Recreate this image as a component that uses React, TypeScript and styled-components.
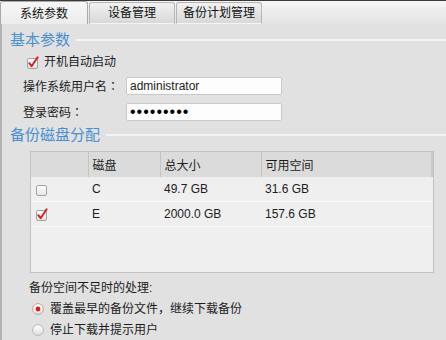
import React from 'react'
import styled, {createGlobalStyle} from 'styled-components'

const GlobalStyle = createGlobalStyle`
  html, body {
    margin: 0;
    padding: 0;
    background: #e1e1e1;
  }
  body {
    font-family: 'Liberation Sans', 'Noto Sans CJK SC', sans-serif;
    font-size: 12px;
    color: #1c1c1c;
  }
`

const Window = styled.div`
  width: 446px;
  height: 340px;
  box-sizing: border-box;
  overflow: hidden;
  border-top: 1px solid #3a3a3a;
  display: flex;
  flex-direction: column;
  background: #e1e1e1;
`

const TabStrip = styled.div`
  display: flex;
  align-items: flex-end;
  gap: 1px;
  height: 23px;
  flex-shrink: 0;
  background: linear-gradient(#f7f5f5, #e3e3e3);
`

const Tab = styled.div<{$active?: boolean; $width: number}>`
  width: ${p => p.$width}px;
  height: ${p => (p.$active ? 23 : 22)}px;
  box-sizing: border-box;
  display: flex;
  align-items: center;
  justify-content: center;
  border: 1px solid ${p => (p.$active ? '#a9a9a9' : '#b6b6b6')};
  border-bottom: ${p => (p.$active ? 'none' : '1px solid #f4f4f4')};
  border-radius: 3px 3px 0 0;
  background: ${p =>
    p.$active
      ? 'linear-gradient(#f6f6f6, #ececec)'
      : 'linear-gradient(#f1f1f1, #d8d8d8)'};
  color: #111;
  font-size: 12px;
  line-height: 14px;
  padding-top: ${p => (p.$active ? 1 : 0)}px;
`

const Panel = styled.div`
  flex: 1;
  display: flex;
  flex-direction: column;
  border-left: 2px solid #b3b3b3;
  padding-left: 8px;
`

const SectionTitle = styled.div<{$top: number}>`
  display: flex;
  align-items: center;
  gap: 6px;
  height: 20px;
  margin-top: ${p => p.$top}px;
  color: #4a8fd2;
  font-size: 15px;
  line-height: 20px;
  &::after {
    content: '';
    flex: 1;
    height: 2px;
    background: #f4f4f4;
  }
`

const CheckRow = styled.label`
  display: flex;
  align-items: center;
  gap: 4px;
  height: 20px;
  margin-top: 2px;
  padding-left: 17px;
  line-height: 14px;
`

const FormRow = styled.div<{$top: number}>`
  display: flex;
  align-items: center;
  height: 20px;
  margin-top: ${p => p.$top}px;
  padding-left: 13px;
`

const FieldLabel = styled.span`
  width: 103px;
  line-height: 14px;
`

// full-width colon drawn centred in its cell, as in the original dialog
const Colon = styled.span`
  font-family: 'Noto Sans CJK TC', sans-serif;
`

const Field = styled.input`
  width: 156px;
  height: 18px;
  box-sizing: border-box;
  margin: 0;
  padding: 0 3px;
  border: 1px solid #c9c9c9;
  border-radius: 2px;
  background: #fdfdfd;
  font-family: 'Liberation Sans', sans-serif;
  font-size: 12px;
  color: #1c1c1c;
  outline: none;
  &[type='password'] {
    letter-spacing: 1px;
    font-size: 16px;
    color: #000;
  }
`

const TableBox = styled.div`
  width: 404px;
  height: 122px;
  box-sizing: border-box;
  margin: 6px 0 0 20px;
  border: 1px solid #c2c2c2;
  background: #efefef;
`

const DiskTable = styled.table`
  width: 100%;
  border-collapse: collapse;
  table-layout: fixed;
`

const HeadCell = styled.th<{$divider?: boolean; $last?: boolean}>`
  height: 25px;
  padding: 0 0 0 4px;
  background: #dbdbdb;
  text-align: left;
  font-weight: normal;
  color: #1c1c1c;
  border-left: ${p => (p.$divider ? '1px solid #c4c4c4' : 'none')};
  border-right: ${p => (p.$last ? '2px solid #c8c8c8' : 'none')};
`

const Cell = styled.td<{$check?: boolean}>`
  height: 24px;
  padding: 0 0 0 ${p => (p.$check ? 5 : 4)}px;
  border-bottom: 1px solid #fbfbfb;
  vertical-align: middle;
  color: #1c1c1c;
  svg {
    display: block;
  }
`

const Note = styled.div`
  margin-top: 7px;
  padding-left: 19px;
  height: 16px;
  line-height: 16px;
`

const RadioRow = styled.label`
  display: flex;
  align-items: center;
  gap: 6px;
  height: 17px;
  margin-top: 4px;
  padding-left: 22px;
  line-height: 14px;
`

const CheckBox = ({checked}: {checked: boolean}) => (
  <svg width="13" height="13" viewBox="0 0 13 13">
    <defs>
      <linearGradient id="cbfill" x1="0" y1="0" x2="0" y2="1">
        <stop offset="0" stopColor="#ffffff" />
        <stop offset="1" stopColor="#e4e4e4" />
      </linearGradient>
    </defs>
    <rect x="0.5" y="2.5" width="10" height="10" rx="1.5" fill="url(#cbfill)" stroke="#a3a3a3" />
    {checked && (
      <path d="M2.3 7.2 L4.6 10.2 L10.6 1.2" fill="none" stroke="#d3201f" strokeWidth="1.9" strokeLinecap="round" strokeLinejoin="round" />
    )}
  </svg>
)

const Radio = ({checked}: {checked: boolean}) => (
  <svg width="12" height="12" viewBox="0 0 12 12">
    <defs>
      <linearGradient id="rdfill" x1="0" y1="0" x2="0" y2="1">
        <stop offset="0" stopColor="#ffffff" />
        <stop offset="1" stopColor="#e2e2e2" />
      </linearGradient>
    </defs>
    <circle cx="6" cy="6" r="5.4" fill="url(#rdfill)" stroke={checked ? '#d59a9a' : '#b5b5b5'} strokeWidth="1" />
    {checked && <circle cx="6" cy="6" r="2.4" fill="#d3201f" />}
  </svg>
)

const disks = [
  {name: 'C', total: '49.7 GB', free: '31.6 GB', checked: false},
  {name: 'E', total: '2000.0 GB', free: '157.6 GB', checked: true},
]

export default function App() {
  return (
    <>
      <GlobalStyle />
      <Window>
        <TabStrip>
          <Tab $active $width={88}>系统参数</Tab>
          <Tab $width={86}>设备管理</Tab>
          <Tab $width={86}>备份计划管理</Tab>
        </TabStrip>
        <Panel>
          <SectionTitle $top={6}>基本参数</SectionTitle>
          <CheckRow>
            <CheckBox checked />
            开机自动启动
          </CheckRow>
          <FormRow $top={4}>
            <FieldLabel>
              操作系统用户名<Colon>：</Colon>
            </FieldLabel>
            <Field type="text" value="administrator" readOnly />
          </FormRow>
          <FormRow $top={6}>
            <FieldLabel>
              登录密码<Colon>：</Colon>
            </FieldLabel>
            <Field type="password" value="123456789" readOnly />
          </FormRow>
          <SectionTitle $top={3}>备份磁盘分配</SectionTitle>
          <TableBox>
            <DiskTable>
              <colgroup>
                <col style={{width: 57}} />
                <col style={{width: 72}} />
                <col style={{width: 101}} />
                <col />
              </colgroup>
              <thead>
                <tr>
                  <HeadCell />
                  <HeadCell $divider>磁盘</HeadCell>
                  <HeadCell $divider>总大小</HeadCell>
                  <HeadCell $divider $last>可用空间</HeadCell>
                </tr>
              </thead>
              <tbody>
                {disks.map(d => (
                  <tr key={d.name}>
                    <Cell $check>
                      <CheckBox checked={d.checked} />
                    </Cell>
                    <Cell>{d.name}</Cell>
                    <Cell>{d.total}</Cell>
                    <Cell>{d.free}</Cell>
                  </tr>
                ))}
              </tbody>
            </DiskTable>
          </TableBox>
          <Note>备份空间不足时的处理:</Note>
          <RadioRow>
            <Radio checked />
            覆盖最早的备份文件，继续下载备份
          </RadioRow>
          <RadioRow>
            <Radio checked={false} />
            停止下载并提示用户
          </RadioRow>
        </Panel>
      </Window>
    </>
  )
}
